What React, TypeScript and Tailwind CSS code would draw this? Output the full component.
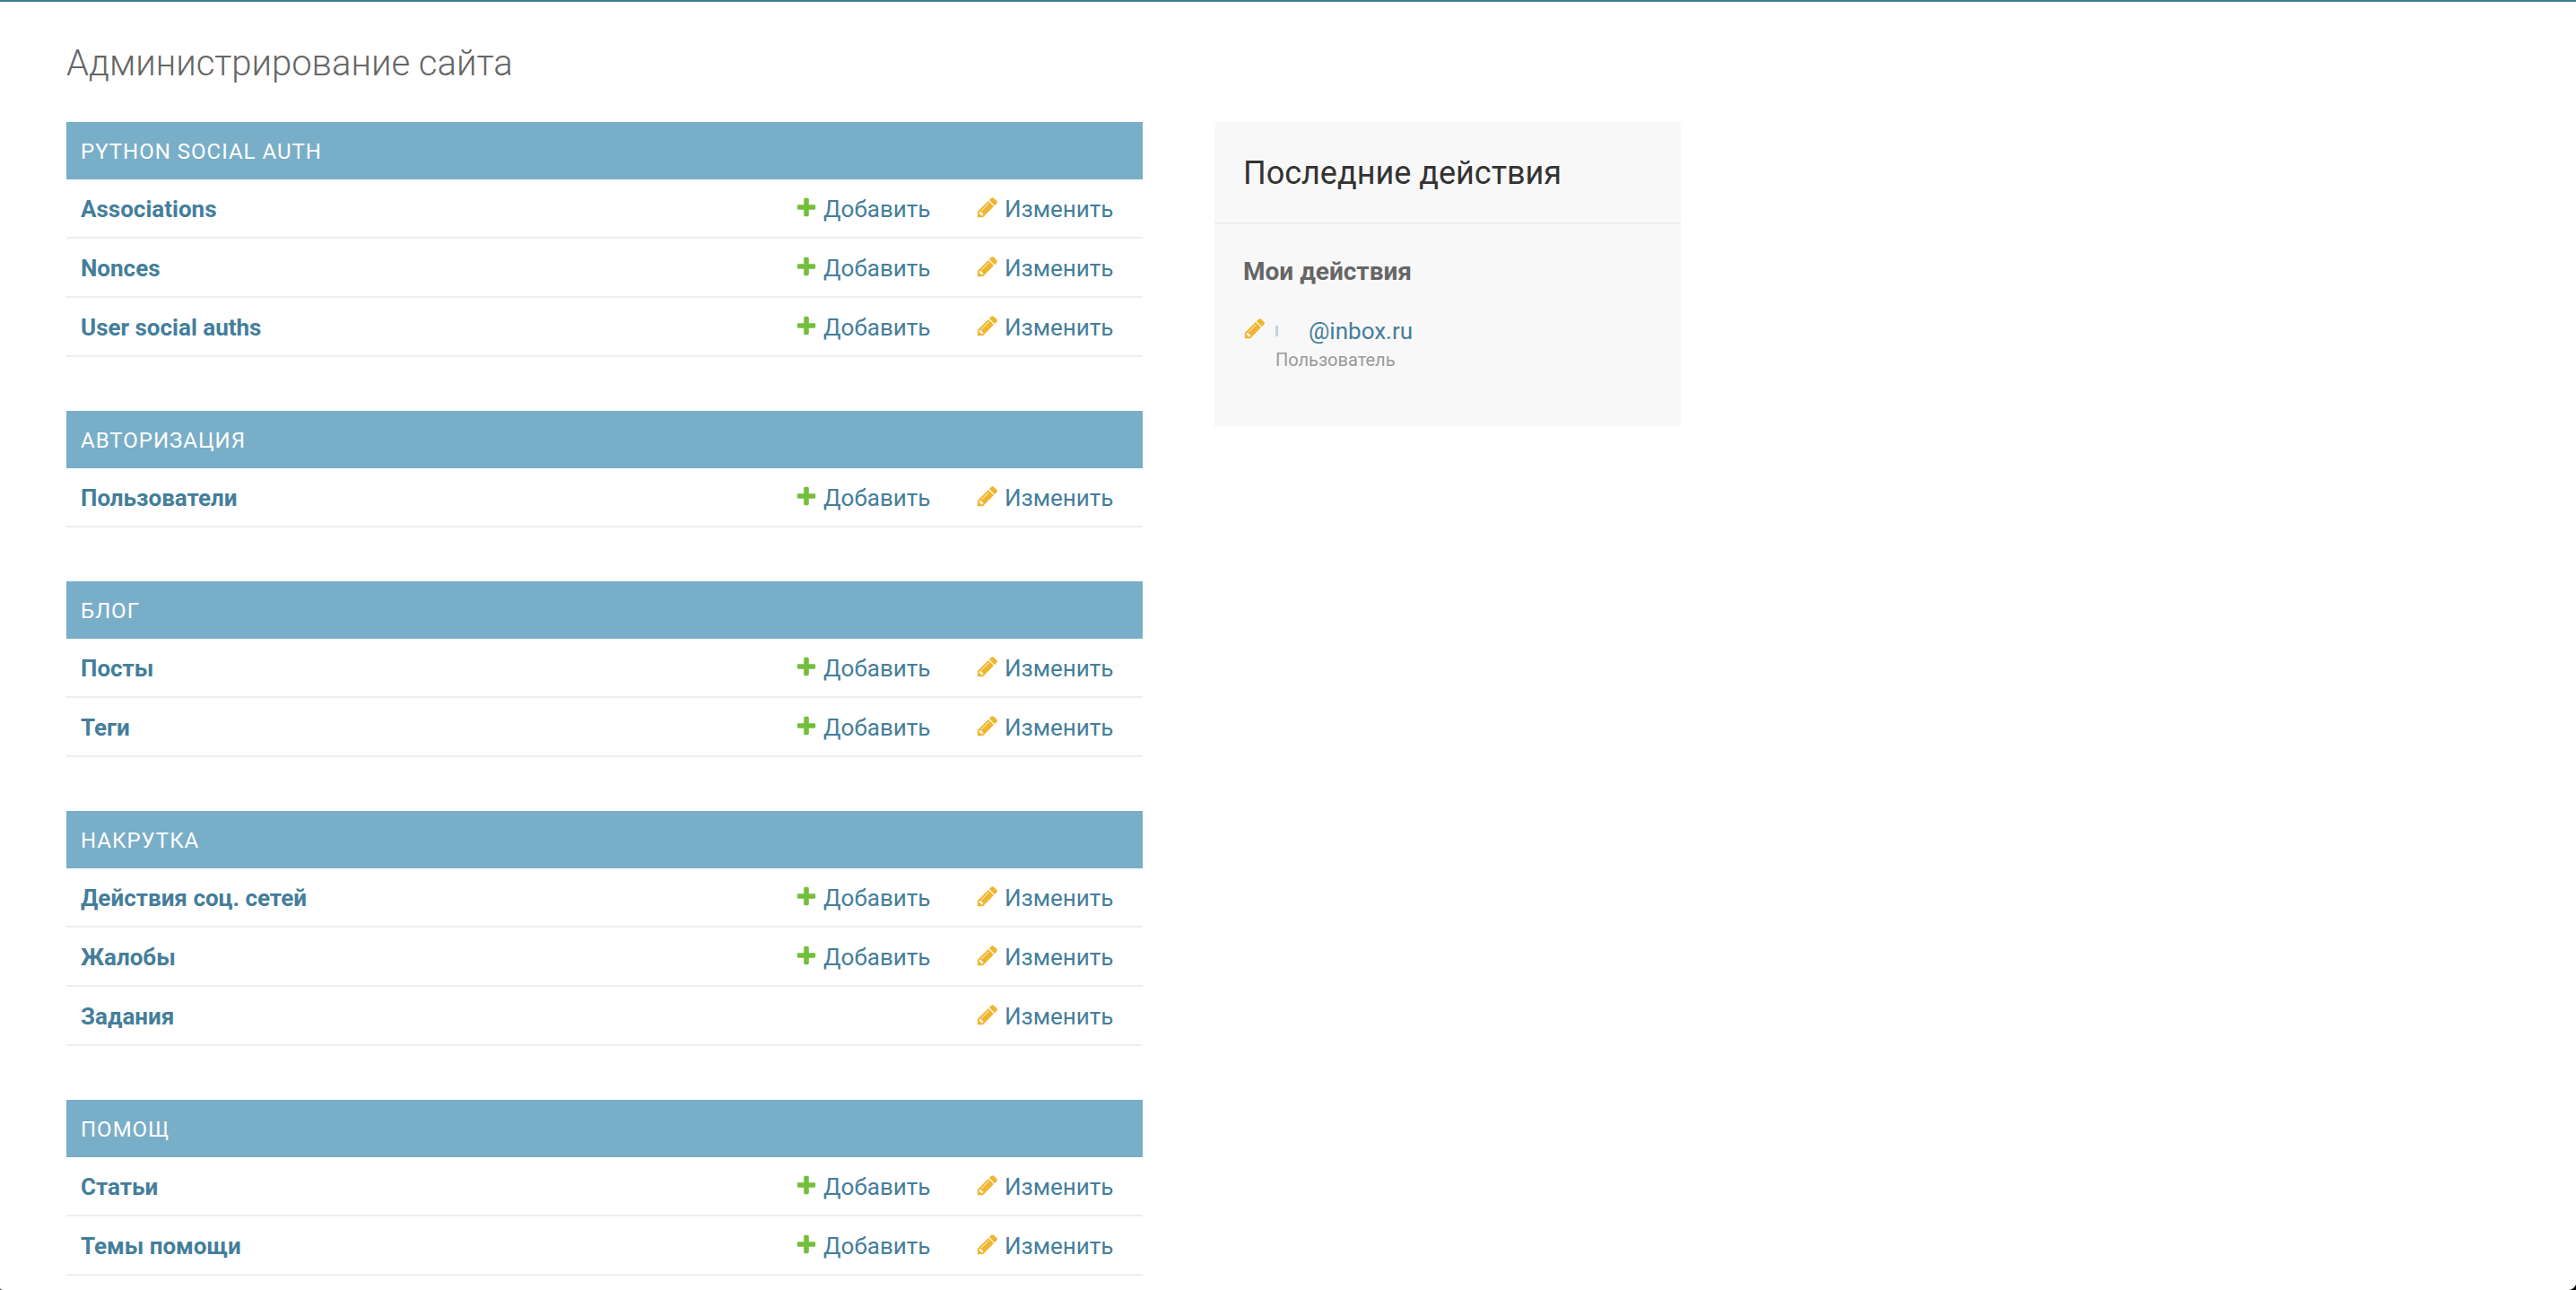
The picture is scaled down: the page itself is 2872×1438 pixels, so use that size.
const plusPath =
	"M1600 796v192q0 40-28 68t-68 28h-416v416q0 40-28 68t-68 28h-192q-40 0-68-28t-28-68v-416h-416q-40 0-68-28t-28-68v-192q0-40 28-68t68-28h416v-416q0-40 28-68t68-28h192q40 0 68 28t28 68v416h416q40 0 68 28t28 68z";
const pencilPath =
	"M491 1536l91-91-235-235-91 91v107h128v128h107zm523-928q0-22-22-22-10 0-17 7l-542 542q-7 7-7 17 0 22 22 22 10 0 17-7l542-542q7-7 7-17zm-54-192l416 416-832 832h-416v-416zm683 96q0 53-37 90l-166 166-416-416 166-165q36-38 90-38 53 0 91 38l235 234q37 39 37 91z";

const sections = [
	{
		title: "Python Social Auth",
		rows: [
			{ name: "Associations", add: true },
			{ name: "Nonces", add: true },
			{ name: "User social auths", add: true },
		],
	},
	{ title: "Авторизация", rows: [{ name: "Пользователи", add: true }] },
	{
		title: "Блог",
		rows: [
			{ name: "Посты", add: true },
			{ name: "Теги", add: true },
		],
	},
	{
		title: "Накрутка",
		rows: [
			{ name: "Действия соц. сетей", add: true },
			{ name: "Жалобы", add: true },
			{ name: "Задания", add: false },
		],
	},
	{
		title: "Помощ",
		rows: [
			{ name: "Статьи", add: true },
			{ name: "Темы помощи", add: true },
		],
	},
];

function PlusIcon() {
	return (
		<svg viewBox="0 0 1792 1792" className="mb-[5px] h-[26px] w-[26px] shrink-0 fill-[#73bf3c]">
			<path d={plusPath} />
		</svg>
	);
}

function PencilIcon() {
	return (
		<svg viewBox="0 0 1792 1792" className="mb-[5px] h-[26px] w-[26px] shrink-0 fill-[#f0b52f]">
			<path d={pencilPath} />
		</svg>
	);
}

function Row(props: { name: string; add: boolean }) {
	return (
		<div className="flex h-[66px] items-center border-b-2 border-[#eeeeee] pt-[3px] text-[26px] text-[#447e9b]">
			<a className="flex-1 pl-4 font-bold">{props.name}</a>
			<div className="w-[202px]">
				{props.add ? (
					<a className="flex items-center gap-[6px]">
						<PlusIcon />
						Добавить
					</a>
				) : null}
			</div>
			<a className="flex w-[186px] items-center gap-[6px]">
				<PencilIcon />
				Изменить
			</a>
		</div>
	);
}

function Section(props: (typeof sections)[number]) {
	return (
		<section className="mb-[60px]">
			<h2 className="flex h-16 items-center bg-[#79aec8] pl-4 pt-[2px] text-[24px] font-normal uppercase tracking-[1px] text-white">
				{props.title}
			</h2>
			{props.rows.map((row) => (
				<Row key={row.name} {...row} />
			))}
		</section>
	);
}

function RecentActions() {
	return (
		<aside className="h-[340px] w-[520px] shrink-0 bg-[#f8f8f8]">
			<h2 className="flex h-[114px] items-center border-b-2 border-[#eeeeee] pl-8 pt-[2px] text-[36px] font-normal text-[#333333]">
				Последние действия
			</h2>
			<div className="pl-8 pt-[37px]">
				<h3 className="text-[28px] leading-[32px] font-bold text-[#666666]">Мои действия</h3>
				<div className="mt-[34px] flex gap-[10px]">
					<div>
						<PencilIcon />
					</div>
					<div>
						<a className="flex text-[26px] leading-[32px] text-[#447e9b]">
							<span className="flex w-[37px] items-center">
								<span className="h-[12px] w-[3px] bg-[#447e9b] opacity-30" />
							</span>
							@inbox.ru
						</a>
						<p className="text-[20px] leading-[32px] text-[#999999]">Пользователь</p>
					</div>
				</div>
			</div>
		</aside>
	);
}

export default function App() {
	return (
		<div className="relative h-[1438px] overflow-hidden border-t-2 border-[#417690] bg-white font-['Roboto',sans-serif]">
			<div className="pl-[74px] pt-[43px]">
				<h1 className="text-[40px] leading-[52px] font-light text-[#666666]">Администрирование сайта</h1>
				<div className="mt-[39px] flex gap-20">
					<div className="w-[1200px]">
						{sections.map((section) => (
							<Section key={section.title} {...section} />
						))}
					</div>
					<RecentActions />
				</div>
			</div>
			{/* window corners that show in the capture */}
			<svg viewBox="0 0 9 6" className="absolute bottom-0 right-0 h-[6px] w-[9px] fill-black">
				<path d="M9 0V6H0C4 6 7 4 9 0Z" />
			</svg>
			<svg viewBox="0 0 3 2" className="absolute bottom-0 left-0 h-[2px] w-[3px] fill-[#555555]">
				<path d="M0 0V2H3C2 2 1 1 0 0Z" />
			</svg>
		</div>
	);
}
